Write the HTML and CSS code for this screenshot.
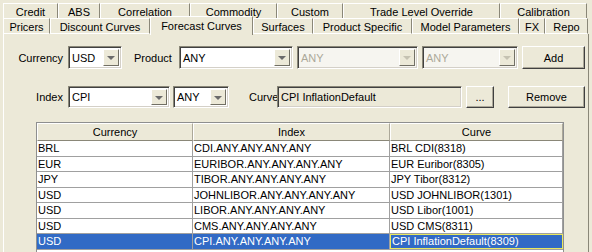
FILE: index.html
```html
<!DOCTYPE html>
<html>
<head>
<meta charset="utf-8">
<link rel="stylesheet" href="styles.css">
</head>
<body>
<div class="tabs">
  <div class="tabrow back">
    <div class="tab t-credit">Credit</div>
    <div class="tab t-abs">ABS</div>
    <div class="tab t-corr">Correlation</div>
    <div class="tab t-comm">Commodity</div>
    <div class="tab t-cust">Custom</div>
    <div class="tab t-tlo">Trade Level Override</div>
    <div class="tab t-cal">Calibration</div>
  </div>
  <div class="tabrow front">
    <div class="tab t-pric">Pricers</div>
    <div class="tab t-disc">Discount Curves</div>
    <div class="tab t-fore selected">Forecast Curves</div>
    <div class="tab t-surf">Surfaces</div>
    <div class="tab t-prod">Product Specific</div>
    <div class="tab t-model">Model Parameters</div>
    <div class="tab t-fx">FX</div>
    <div class="tab t-repo">Repo</div>
  </div>
</div>
<div class="panel">
  <div class="row row-a">
    <div class="label l-first">Currency</div>
    <div class="combo c-usd"><span class="val">USD</span><span class="arrow"></span></div>
    <div class="label l-product">Product</div>
    <div class="combo c-product"><span class="val">ANY</span><span class="arrow"></span></div>
    <div class="combo disabled c-any1"><span class="val">ANY</span><span class="arrow"></span></div>
    <div class="combo disabled c-any2"><span class="val">ANY</span><span class="arrow"></span></div>
    <div class="button b-add">Add</div>
  </div>
  <div class="row row-b">
    <div class="label l-first">Index</div>
    <div class="combo c-index"><span class="val">CPI</span><span class="arrow"></span></div>
    <div class="combo c-any3"><span class="val">ANY</span><span class="arrow"></span></div>
    <div class="label l-curve">Curve</div>
    <div class="field f-curve">CPI InflationDefault</div>
    <div class="button b-dots">...</div>
    <div class="button b-remove">Remove</div>
  </div>
  <div class="grid">
    <div class="thead">
      <div class="th col-cur">Currency</div>
      <div class="th col-idx">Index</div>
      <div class="th col-crv">Curve</div>
    </div>
    <div class="tr"><div class="td col-cur">BRL</div><div class="td col-idx">CDI.ANY.ANY.ANY.ANY</div><div class="td col-crv">BRL CDI(8318)</div></div>
    <div class="tr"><div class="td col-cur">EUR</div><div class="td col-idx">EURIBOR.ANY.ANY.ANY.ANY</div><div class="td col-crv">EUR Euribor(8305)</div></div>
    <div class="tr"><div class="td col-cur">JPY</div><div class="td col-idx">TIBOR.ANY.ANY.ANY.ANY</div><div class="td col-crv">JPY Tibor(8312)</div></div>
    <div class="tr"><div class="td col-cur">USD</div><div class="td col-idx">JOHNLIBOR.ANY.ANY.ANY.ANY</div><div class="td col-crv">USD JOHNLIBOR(1301)</div></div>
    <div class="tr"><div class="td col-cur">USD</div><div class="td col-idx">LIBOR.ANY.ANY.ANY.ANY</div><div class="td col-crv">USD Libor(1001)</div></div>
    <div class="tr"><div class="td col-cur">USD</div><div class="td col-idx">CMS.ANY.ANY.ANY.ANY</div><div class="td col-crv">USD CMS(8311)</div></div>
    <div class="tr sel"><div class="td col-cur">USD</div><div class="td col-idx">CPI.ANY.ANY.ANY.ANY</div><div class="td col-crv focus">CPI InflationDefault(8309)</div></div>
  </div>
</div>
</body>
</html>
```

FILE: styles.css
```css
* { box-sizing: border-box; }
html, body { margin: 0; padding: 0; }
body {
  width: 592px;
  height: 252px;
  overflow: hidden;
  background: #ECE9D8;
  font-family: "Liberation Sans", Arial, sans-serif;
  font-size: 11px;
  color: #000;
}

/* ---------- tabs ---------- */
.tabs { height: 34px; padding-top: 3px; position: relative; }
.tabrow { display: flex; margin-left: 3px; }
.tabrow.back { height: 15px; }
.tabrow.back .tab { padding-top: 1px; }
.tabrow.front { height: 16px; position: relative; z-index: 2; }
.tab {
  display: flex;
  align-items: center;
  justify-content: center;
  white-space: nowrap;
  background: #ECE9D8;
  border-top: 1px solid #fff;
  border-left: 1px solid #fff;
  border-right: 1px solid #8A8778;
}
.tabrow.front .tab { border-bottom: 1px solid #fff; padding-top: 2px; }
.tabrow.front .tab.selected {
  margin-top: -2px;
  height: 19px;
  border-bottom: none;
  padding-top: 0;
  padding-bottom: 1px;
  position: relative;
  z-index: 3;
}
.t-credit { width: 55px; }
.t-abs { width: 42px; }
.t-corr { width: 90px; }
.t-comm { width: 87px; }
.t-cust { width: 66px; }
.t-tlo { width: 157px; }
.t-cal { width: 87px; }
.t-pric { width: 47px; }
.t-disc { width: 100px; }
.t-fore { width: 103px; }
.t-surf { width: 60px; }
.t-prod { width: 99px; }
.t-model { width: 107px; }
.t-fx { width: 26px; }
.t-repo { width: 43px; }

/* ---------- panel ---------- */
.panel {
  margin-left: 3px;
  width: 586px;
  height: 220px;
  border-left: 1px solid #fff;
  border-right: 1px solid #8A8778;
  padding-top: 12px;
}
.row { display: flex; align-items: center; }
.row-a { height: 23px; }
.row-b { height: 22px; margin-top: 17px; }

.label { white-space: nowrap; }
.l-first { width: 59px; text-align: right; margin-right: 5px; }
.l-product { margin-left: 12px; width: 41px; margin-right: 4px; }
.l-curve { margin-left: 20px; width: 28px; }

.combo {
  display: flex;
  height: 100%;
  background: #fff;
  border-top: 1px solid #8A8778;
  border-left: 1px solid #8A8778;
  border-right: 1px solid #fff;
  border-bottom: 1px solid #fff;
  box-shadow: inset 1px 1px 0 #404040, inset -1px -1px 0 #D4D0C8;
  padding: 2px;
}
.combo .val { flex: 1; padding-left: 1px; display: flex; align-items: center; }
.combo .arrow {
  width: 16px;
  background: #ECE9D8;
  border-top: 1px solid #fff;
  border-left: 1px solid #fff;
  border-right: 1px solid #716F64;
  border-bottom: 1px solid #716F64;
  position: relative;
}
.combo .arrow::after {
  content: "";
  position: absolute;
  left: 3px;
  top: 6px;
  border-left: 4px solid transparent;
  border-right: 4px solid transparent;
  border-top: 4px solid #6B6B6B;
}
.combo.disabled { background: #F6F5F0; color: #ACA899; }
.combo.disabled .arrow::after { border-top-color: #C5C2B2; }

.c-usd { width: 54px; }
.c-product { width: 114px; }
.c-any1 { width: 121px; margin-left: 4px; }
.c-any2 { width: 96px; margin-left: 4px; }
.c-index { width: 102px; }
.c-any3 { width: 56px; margin-left: 3px; }

.field {
  height: 100%;
  width: 185px;
  display: flex;
  align-items: center;
  padding-left: 3px;
  border-top: 1px solid #8A8778;
  border-left: 1px solid #8A8778;
  border-right: 1px solid #fff;
  border-bottom: 1px solid #fff;
  box-shadow: inset 1px 1px 0 #404040, inset -1px -1px 0 #D4D0C8;
}

.button {
  height: 100%;
  display: flex;
  align-items: center;
  justify-content: center;
  background: #ECE9D8;
  border-top: 1px solid #fff;
  border-left: 1px solid #fff;
  border-right: 1px solid #404040;
  border-bottom: 1px solid #404040;
  box-shadow: inset -1px -1px 0 #ACA899;
}
.b-add { width: 63px; margin-left: 4px; }
.b-dots { width: 28px; margin-left: 4px; }
.b-remove { width: 77px; margin-left: 14px; }

/* ---------- table ---------- */
.grid {
  margin-left: 32px;
  margin-top: 14px;
  width: 528px;
  height: 140px;
  background: #fff;
  border: 1px solid #8E8F8F;
}
.thead { display: flex; height: 18px; }
.th {
  display: flex;
  align-items: center;
  justify-content: center;
  background: #ECE9D8;
  border-top: 1px solid #fff;
  border-left: 1px solid #fff;
  border-right: 1px solid #ACA899;
  border-bottom: 1px solid #8A8778;
}
.col-cur { width: 156px; }
.col-idx { width: 197px; }
.col-crv { width: 173px; }
.tr { display: flex; height: 15.5px; border-bottom: 1px solid #A0A0A0; }
.td {
  display: flex;
  align-items: center;
  padding-left: 1px;
  white-space: nowrap;
  overflow: hidden;
  border-right: 1px solid #A0A0A0;
}
.tr.sel { background: #316AC5; color: #fff; }
.td.focus { border: 1px solid #E8E860; }
```
